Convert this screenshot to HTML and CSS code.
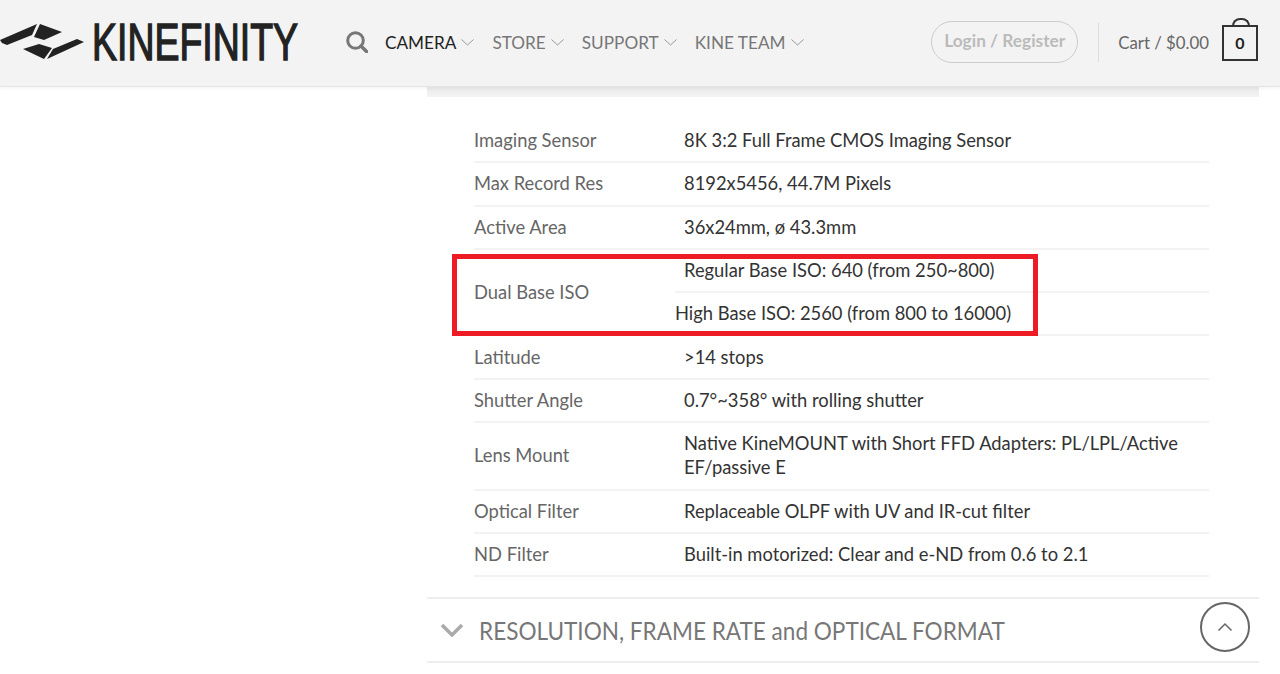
FILE: index.html
```html
<!DOCTYPE html>
<html lang="en">
<head>
<meta charset="utf-8">
<title>Kinefinity</title>
<link rel="stylesheet" href="styles.css">
</head>
<body>
<header class="header">
  <a class="logo" href="#">
    <svg class="logo-mark" width="86" height="40" viewBox="0 23 86 40">
      <polygon class="ink" points="0,40 37,24 32,35 7,45 2,43"/>
      <polygon class="ink" points="40,24 62,32 44,40 34,37"/>
      <polygon class="ink" points="23,49 39,44 52,48 44,59"/>
      <polygon class="ink" points="47,59 53,49 77,39 84,42"/>
    </svg>
    <svg class="logo-word" width="210" height="44" viewBox="0 0 210 44">
      <text class="logo-text" x="-2" y="39" textLength="206" lengthAdjust="spacingAndGlyphs">KINEFINITY</text>
    </svg>
  </a>
  <nav class="nav">
    <svg class="search" width="22" height="22" viewBox="0 0 22 22">
      <circle class="search-ring" cx="9.500" cy="9.500" r="7.800"/>
      <line class="search-handle" x1="15" y1="15" x2="20.500" y2="20.500"/>
    </svg>
    <a class="nav-item active" href="#">CAMERA<svg class="caret" width="13" height="7" viewBox="0 0 13 7"><polyline points="0.500,0.500 6.500,6 12.500,0.500"/></svg></a>
    <a class="nav-item" href="#">STORE<svg class="caret" width="13" height="7" viewBox="0 0 13 7"><polyline points="0.500,0.500 6.500,6 12.500,0.500"/></svg></a>
    <a class="nav-item" href="#">SUPPORT<svg class="caret" width="13" height="7" viewBox="0 0 13 7"><polyline points="0.500,0.500 6.500,6 12.500,0.500"/></svg></a>
    <a class="nav-item" href="#">KINE TEAM<svg class="caret" width="13" height="7" viewBox="0 0 13 7"><polyline points="0.500,0.500 6.500,6 12.500,0.500"/></svg></a>
  </nav>
  <div class="account">
    <a class="login" href="#">Login / Register</a>
    <span class="divider"></span>
    <a class="cart" href="#">Cart / $0.00</a>
    <span class="bag"><span class="bag-handle"></span>0</span>
  </div>
</header>
<main class="main">
  <div class="band"></div>
  <div class="spec-wrap">
    <table class="spec">
      <colgroup><col class="col-label"><col class="col-value"></colgroup>
      <tr><th>Imaging Sensor</th><td>8K 3:2 Full Frame CMOS Imaging Sensor</td></tr>
      <tr><th>Max Record Res</th><td>8192x5456, 44.7M Pixels</td></tr>
      <tr><th>Active Area</th><td>36x24mm, ø 43.3mm</td></tr>
      <tr><th rowspan="2">Dual Base ISO</th><td>Regular Base ISO: 640 (from 250~800)</td></tr>
      <tr><td class="flush">High Base ISO: 2560 (from 800 to 16000)</td></tr>
      <tr><th>Latitude</th><td>&gt;14 stops</td></tr>
      <tr><th>Shutter Angle</th><td>0.7°~358° with rolling shutter</td></tr>
      <tr class="tall"><th>Lens Mount</th><td>Native KineMOUNT with Short FFD Adapters: PL/LPL/Active EF/passive E</td></tr>
      <tr><th>Optical Filter</th><td>Replaceable OLPF with UV and IR-cut filter</td></tr>
      <tr><th>ND Filter</th><td>Built-in motorized: Clear and e-ND from 0.6 to 2.1</td></tr>
    </table>
    <div class="highlight"></div>
  </div>
  <section class="accordion">
    <svg class="acc-caret" width="24" height="14" viewBox="0 0 24 14"><polyline points="2,2 12,12 22,2"/></svg>
    <h2 class="acc-title">RESOLUTION, FRAME RATE and OPTICAL FORMAT</h2>
  </section>
</main>
<a class="to-top" href="#"><svg width="16" height="10" viewBox="0 0 16 10"><polyline points="1.500,8.500 8,2 14.500,8.500"/></svg></a>
</body>
</html>
```
FILE: styles.css
```css
* { box-sizing: border-box; }
html, body { margin: 0; height: 674px; overflow: hidden; background: #fff; }
body { font-family: Lato, "Open Sans", sans-serif; color: #333; }
a { color: inherit; text-decoration: none; }

.header {
  position: relative;
  z-index: 2;
  height: 87px;
  display: flex;
  align-items: center;
  background: #f3f3f3;
  border-bottom: 1px solid #e4e4e4;
  box-shadow: 0 1px 4px rgba(0, 0, 0, .06);
}
.logo { display: flex; align-items: center; gap: 8px; width: 346px; flex: none; }
.logo-word { flex: none; overflow: visible; }
.logo-text { font-family: "Liberation Sans", sans-serif; font-size: 51px; fill: #222; stroke: #222; stroke-width: 1.400; }
.ink { fill: #222; }

.nav { display: flex; align-items: center; gap: 18px; font-size: 17.200px; color: #777; padding-bottom: 2px; }
.search { margin-right: -1px; }
.search-ring { fill: none; stroke: #777; stroke-width: 3; }
.search-handle { stroke: #777; stroke-width: 3.500; stroke-linecap: round; }
.nav-item { display: flex; align-items: center; gap: 5px; white-space: nowrap; }
.nav-item.active { color: #222; }
.caret { fill: none; stroke: #999; stroke-width: 1; }

.account { margin-left: auto; margin-right: 22px; display: flex; align-items: center; }
.login {
  width: 147px;
  height: 42px;
  margin-top: -3px;
  display: flex;
  align-items: center;
  justify-content: center;
  padding-bottom: 3px;
  border: 1px solid #ccc;
  border-radius: 21px;
  color: #bbb;
  font-size: 17.300px;
  font-weight: 700;
}
.divider { width: 1px; height: 39px; margin: -2px 19px 0 20px; background: #ddd; }
.cart { font-size: 16.800px; color: #666; margin-right: 13px; margin-top: -2px; }
.bag {
  position: relative;
  width: 36px;
  height: 36px;
  margin-top: -1px;
  display: flex;
  align-items: center;
  justify-content: center;
  border: 2px solid #333;
  font-size: 16px;
  font-weight: 700;
  color: #222;
}
.bag-handle {
  position: absolute;
  left: 8px;
  top: -9px;
  width: 18px;
  height: 8px;
  border: 2px solid #333;
  border-bottom: 0;
  border-radius: 9px 9px 0 0;
}

.main { padding-left: 427px; padding-right: 21px; }
.band { height: 10px; background: linear-gradient(#eaeaea, #f3f3f3); }

.spec-wrap { position: relative; padding: 22px 50px 0 47px; }
.spec { width: 735px; border-collapse: collapse; table-layout: fixed; font-size: 18.350px; }
.col-label { width: 201px; }
.spec tr { height: 43.300px; }
.spec tr.tall { height: 67.500px; }
.spec th, .spec td { padding: 0 0 1px; border-bottom: 2px solid #f3f3f3; line-height: 24px; vertical-align: middle; text-align: left; }
.spec th { font-weight: 400; color: #666; }
.spec td { padding-left: 9px; color: #333; }
.spec td.flush { padding-left: 0; }

.highlight {
  position: absolute;
  left: 25px;
  top: 157px;
  width: 586px;
  height: 82px;
  border: 5px solid #ed1c24;
}

.accordion {
  height: 66px;
  margin-top: 20px;
  display: flex;
  align-items: center;
  gap: 15px;
  padding-left: 13px;
  border-top: 2px solid #eee;
  border-bottom: 2px solid #eee;
}
.acc-caret { fill: none; stroke: #aaa; stroke-width: 3.500; flex: none; }
.acc-title { margin: 0; font-size: 25px; font-weight: 400; color: #777; white-space: nowrap; transform: scaleX(.902); transform-origin: left center; }

.to-top {
  position: absolute;
  left: 1200px;
  top: 602px;
  width: 50px;
  height: 50px;
  display: flex;
  align-items: center;
  justify-content: center;
  border: 2px solid #666;
  border-radius: 50%;
}
.to-top svg { fill: none; stroke: #666; stroke-width: 1.500; }
```
